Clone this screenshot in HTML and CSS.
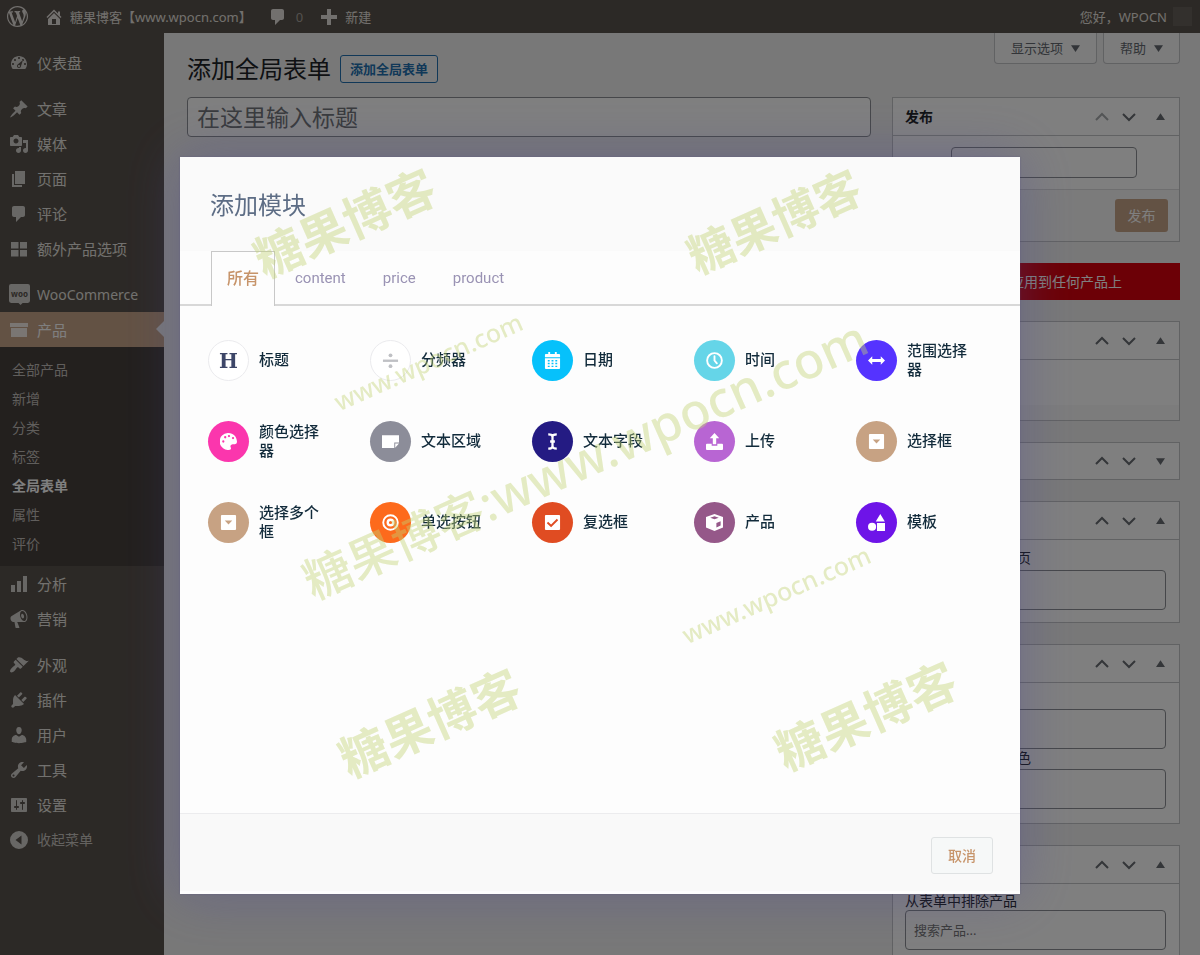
FILE: index.html
```html
<!DOCTYPE html>
<html lang="zh-CN">
<head>
<meta charset="utf-8">
<meta name="viewport" content="width=device-width, initial-scale=1">
<title>添加全局表单</title>
<link rel="stylesheet" href="styles.css">
</head>
<body>
<svg class="sprite" aria-hidden="true">
  <symbol id="wp" viewBox="0 0 20 20"><path d="M20 10c0-5.51-4.49-10-10-10C4.48 0 0 4.49 0 10c0 5.52 4.48 10 10 10 5.51 0 10-4.48 10-10zM7.78 15.37L4.37 6.22c.55-.02 1.17-.08 1.17-.08.5-.06.44-1.13-.06-1.11 0 0-1.45.11-2.37.11-.18 0-.37 0-.58-.01C4.12 2.69 6.87 1.11 10 1.11c2.33 0 4.45.87 6.05 2.34-.68-.11-1.65.39-1.65 1.58 0 .74.45 1.36.9 2.1.35.61.55 1.36.55 2.46 0 1.49-1.4 5-1.4 5l-3.03-8.37c.54-.02.82-.17.82-.17.5-.05.44-1.25-.06-1.22 0 0-1.44.12-2.38.12-.87 0-2.33-.12-2.33-.12-.5-.03-.56 1.2-.06 1.22l.92.08 1.26 3.41zM17.41 10c.24-.64.74-1.87.43-4.25.7 1.29 1.05 2.71 1.05 4.25 0 3.29-1.73 6.24-4.4 7.78.97-2.59 1.94-5.2 2.92-7.78zM6.1 18.09C3.12 16.65 1.11 13.53 1.11 10c0-1.3.23-2.48.72-3.59C3.25 10.3 4.67 14.2 6.1 18.09zm4.03-6.63l2.58 6.98c-.86.29-1.76.45-2.71.45-.79 0-1.57-.11-2.29-.33.81-2.38 1.62-4.74 2.42-7.1z"/></symbol>
  <symbol id="home" viewBox="0 0 20 20"><path fill-rule="evenodd" d="M16 8.5l1.53 1.53-1.06 1.06L10 4.6l-6.47 6.49-1.06-1.06L10 2.500l4 4v-2h2v4zm-6-2.46l6 5.990V18H4v-5.970zM12 17v-5H8v5h4z"/></symbol>
  <symbol id="comment" viewBox="0 0 20 20"><path d="M5 2h9c1.1 0 2 .9 2 2v7c0 1.1-.9 2-2 2h-2l-5 5v-5H5c-1.100 0-2-.9-2-2V4c0-1.100.9-2 2-2z"/></symbol>
  <symbol id="plus" viewBox="0 0 20 20"><path d="M8 2h4v6h6v4h-6v6H8v-6H2V8h6z"/></symbol>
  <symbol id="dash" viewBox="0 0 20 20"><path fill-rule="evenodd" d="M3.760 16h12.480c1.100-1.370 1.760-3.110 1.760-5 0-4.420-3.580-8-8-8s-8 3.580-8 8c0 1.890.66 3.630 1.760 5zM10 4c.55 0 1 .45 1 1s-.45 1-1 1-1-.45-1-1 .45-1 1-1zM6 6c.55 0 1 .45 1 1s-.45 1-1 1-1-.45-1-1 .45-1 1-1zm8 0c.55 0 1 .45 1 1s-.45 1-1 1-1-.45-1-1 .45-1 1-1zm-5.370 5.550L14 7l-2 6c0 1.100-.9 2-2 2s-2-.9-2-2c0-.57.24-1.080.63-1.450zM4 10c.55 0 1 .45 1 1s-.45 1-1 1-1-.45-1-1 .45-1 1-1zm12 0c.55 0 1 .45 1 1s-.45 1-1 1-1-.45-1-1 .45-1 1-1zm-5 3c0-.55-.45-1-1-1s-1 .45-1 1 .45 1 1 1 1-.45 1-1z"/></symbol>
  <symbol id="pin" viewBox="0 0 20 20"><path d="M10.440 3.020l1.820-1.820 6.360 6.350-1.830 1.820c-1.050-.68-2.480-.57-3.410.36l-.75.75c-.92.93-1.040 2.350-.35 3.410l-1.830 1.820-2.410-2.410-2.800 2.790c-.42.42-3.380 2.710-3.800 2.290s1.860-3.390 2.280-3.810l2.790-2.790L4.100 9.360l1.830-1.820c1.050.69 2.480.57 3.400-.36l.75-.75c.93-.92 1.050-2.350.36-3.410z"/></symbol>
  <symbol id="media" viewBox="0 0 20 20"><path fill-rule="evenodd" d="M13 11V4c0-.55-.45-1-1-1h-1.670L9 1H5L3.670 3H2c-.55 0-1 .45-1 1v7c0 .55.45 1 1 1h10c.55 0 1-.45 1-1zM7 4.500c1.380 0 2.500 1.120 2.500 2.500S8.380 9.500 7 9.500 4.500 8.380 4.500 7 5.620 4.500 7 4.500zM14 6h5v10.500c0 1.380-1.120 2.500-2.500 2.500S14 17.880 14 16.500s1.120-2.500 2.500-2.500c.17 0 .34.02.5.05V9h-3V6zm-4 8.050V13h2v3.500c0 1.380-1.120 2.500-2.500 2.500S7 17.880 7 16.500 8.120 14 9.500 14c.17 0 .34.02.5.05z"/></symbol>
  <symbol id="page" viewBox="0 0 20 20"><path d="M6 15V2h10v13H6zm-1 1h8v2H3V5h2v11z"/></symbol>
  <symbol id="grid" viewBox="0 0 20 20"><path d="M2 3h7.500v6.500H2zM11 3h7v6.500h-7zM2 11h7.500v6.500H2zM11 11h7v6.500h-7z"/></symbol>
  <symbol id="bubble" viewBox="0 0 20 20"><path d="M2 0h16a2 2 0 0 1 2 2v14a2 2 0 0 1-2 2h-5l-2 2-2-2H2a2 2 0 0 1-2-2V2a2 2 0 0 1 2-2z"/></symbol>
  <symbol id="box" viewBox="0 0 20 20"><path d="M1 3h18v4H1zM2 8h16v9H2z"/></symbol>
  <symbol id="bars" viewBox="0 0 20 20"><path d="M2 11h4v7H2zM8 7h4v11H8zM14 2h4v16h-4z"/></symbol>
  <symbol id="mega" viewBox="0 0 20 20"><path fill-rule="evenodd" d="M18.150 5.940c.46 1.620.38 3.220-.02 4.480-.42 1.280-1.260 2.180-2.300 2.480-.16.06-.26.06-.4.06-.06.02-.12.02-.18.02-.06.02-.14.02-.22.02h-6.800l2.220 5.500c.02.14-.06.26-.14.34-.08.1-.24.16-.34.16H6.950c-.1 0-.26-.06-.34-.16-.08-.08-.16-.2-.14-.34l-1-5.500H4.250l-.02-.02c-.5.06-1.080-.18-1.540-.62s-.88-1.080-1.060-1.880c-.24-.8-.2-1.560-.02-2.200.18-.62.58-1.080 1.060-1.300l.02-.02 9-5.400c.1-.06.18-.1.24-.16.06-.04.14-.08.24-.12.16-.08.28-.12.5-.18 1.040-.3 2.240.1 3.220.98s1.840 2.240 2.260 3.860zm-2.580 5.980h-.02c.4-.1.74-.34 1.040-.7.58-.7.86-1.760.86-3.040 0-.64-.1-1.300-.28-1.980-.34-1.360-1.020-2.500-1.780-3.240s-1.680-1.100-2.460-.88c-.82.22-1.400.96-1.700 2-.32 1.040-.28 2.360.06 3.720.38 1.360 1 2.500 1.800 3.240.78.74 1.620 1.100 2.480.88zm-2.540-7.080c.22-.04.42-.02.62.04.38.16.76.48 1.020 1s.42 1.200.42 1.780c0 .3-.04.56-.12.8-.18.48-.44.84-.86.94-.34.1-.8-.06-1.140-.4s-.64-.86-.78-1.500c-.18-.62-.12-1.240.02-1.720s.48-.84.82-.94z"/></symbol>
  <symbol id="brush" viewBox="0 0 20 20"><path d="M14.480 11.060L7.410 3.990l1.500-1.500c.5-.56 2.300-.47 3.510.32 1.210.8 1.430 1.280 2.910 2.100 1.180.64 2.450 1.260 4.450.85zm-.71.71L6.700 4.700 4.930 6.470c-.39.39-.39 1.020 0 1.410l1.060 1.060c.39.39.39 1.030 0 1.420-.6.6-1.430 1.110-2.210 1.690-.35.26-.7.53-1.010.84C1.430 14.230.4 16.080 1.400 17.070c.99 1 2.840-.03 4.180-1.360.31-.31.58-.66.85-1.020.57-.78 1.080-1.610 1.690-2.210.39-.39 1.020-.39 1.410 0l1.060 1.060c.39.39 1.020.39 1.410 0z"/></symbol>
  <symbol id="plug" viewBox="0 0 20 20"><path d="M13.110 4.360L9.870 7.600 8 5.730l3.240-3.240c.35-.34 1.050-.2 1.560.32.52.51.66 1.210.31 1.550zm-8 1.770l.91-1.120 9.010 9.010-1.190.84c-.71.71-2.630 1.160-3.820 1.160H6.140L4.900 17.260c-.59.59-1.540.59-2.120 0-.59-.58-.59-1.530 0-2.120l1.240-1.240v-3.880c0-1.130.4-3.190 1.090-3.890zm7.260 3.970l3.240-3.240c.34-.35 1.040-.21 1.550.31.52.51.66 1.210.31 1.550l-3.240 3.250z"/></symbol>
  <symbol id="user" viewBox="0 0 20 20"><path d="M10 9.250c-2.270 0-2.730-3.440-2.730-3.440C7 4.020 7.820 2 9.970 2c2.160 0 2.980 2.020 2.710 3.810 0 0-.41 3.440-2.680 3.440zm0 2.570L12.720 10c2.390 0 4.520 2.330 4.520 4.530v2.490s-3.650 1.130-7.240 1.130c-3.650 0-7.240-1.130-7.240-1.130v-2.490c0-2.250 1.940-4.480 4.470-4.480z"/></symbol>
  <symbol id="wrench" viewBox="0 0 20 20"><path fill-rule="evenodd" d="M16.680 9.770c-1.340 1.340-3.300 1.670-4.950.99l-5.410 6.520c-.99.99-2.590.99-3.580 0s-.99-2.590 0-3.570l6.520-5.420c-.68-1.650-.35-3.610.99-4.950 1.280-1.280 3.120-1.620 4.720-1.060l-2.890 2.890 2.820 2.820 2.860-2.870c.53 1.580.18 3.390-1.080 4.650zM3.810 16.210c.4.39 1.040.39 1.430 0 .4-.4.4-1.040 0-1.430-.39-.4-1.030-.4-1.430 0-.39.39-.39 1.030 0 1.430z"/></symbol>
  <symbol id="sliders" viewBox="0 0 20 20"><path fill-rule="evenodd" d="M18 16V4c0-.55-.45-1-1-1H3c-.55 0-1 .45-1 1v12c0 .55.45 1 1 1h14c.55 0 1-.45 1-1zM8 11h1c.55 0 1 .45 1 1s-.45 1-1 1H8v1.500c0 .28-.22.5-.5.5s-.5-.22-.5-.5V13H6c-.55 0-1-.45-1-1s.45-1 1-1h1V5.500c0-.28.22-.5.5-.5s.5.22.5.5V11zm5-2h-1c-.55 0-1-.45-1-1s.45-1 1-1h1V5.500c0-.28.22-.5.5-.5s.5.22.5.5V7h1c.55 0 1 .45 1 1s-.45 1-1 1h-1v5.500c0 .28-.22.5-.5.5s-.5-.22-.5-.5V9z"/></symbol>
  <symbol id="collapse" viewBox="0 0 20 20"><path fill-rule="evenodd" d="M10 1a9 9 0 1 1 0 18 9 9 0 0 1 0-18zm2.500 4.500L6.500 10l6 4.500z"/></symbol>
  <symbol id="up" viewBox="0 0 14 14"><path d="M1 10l6-6 6 6" fill="none" stroke="currentColor" stroke-width="2"/></symbol>
  <symbol id="down" viewBox="0 0 14 14"><path d="M1 4l6 6 6-6" fill="none" stroke="currentColor" stroke-width="2"/></symbol>
  <symbol id="tri-up" viewBox="0 0 8 8"><path d="M4 1l4 6H0z"/></symbol>
  <symbol id="tri-down" viewBox="0 0 8 8"><path d="M4 7L0 1h8z"/></symbol>
  <symbol id="i-divide" viewBox="0 0 18 18"><path d="M1 8h16v2.500H1z"/><circle cx="9" cy="3.500" r="2"/><circle cx="9" cy="15" r="2"/></symbol>
  <symbol id="i-calendar" viewBox="0 0 18 18"><path fill-rule="evenodd" d="M4.500 0h2v2h5V0h2v2H16a1 1 0 0 1 1 1v2.500H1V3a1 1 0 0 1 1-1h2.500zM1 6.500h16V17a1 1 0 0 1-1 1H2a1 1 0 0 1-1-1zM4 8.500v1.500h2V8.500zm4 0v1.500h2V8.500zm4 0v1.500h2V8.500zM4 11.500v1.500h2v-1.500zm4 0v1.500h2v-1.500zm4 0v1.500h2v-1.500zM4 14.500V16h2v-1.500zm4 0V16h2v-1.500zm4 0V16h2v-1.500z"/></symbol>
  <symbol id="i-clock" viewBox="0 0 18 18"><circle cx="9" cy="9" r="7.800" fill="none" stroke="currentColor" stroke-width="2"/><path d="M9 4.500V9l2.500 3" fill="none" stroke="currentColor" stroke-width="2" stroke-linecap="round"/></symbol>
  <symbol id="i-range" viewBox="0 0 18 18"><path d="M0 9l4.500-4.500v3h9v-3L18 9l-4.500 4.500v-3h-9v3z"/></symbol>
  <symbol id="i-palette" viewBox="0 0 18 18"><path fill-rule="evenodd" d="M9 0a9 9 0 1 0 1.500 17.800c1.300-.3 1.300-1.600.8-2.600-.8-1.700.4-3.400 2.200-3.400h2.300A2.200 2.200 0 0 0 18 9.600C18 4 14 0 9 0zM3.500 10.200a1.200 1.200 0 1 1 0-2.400 1.200 1.200 0 0 1 0 2.400zm2-4.500a1.200 1.200 0 1 1 0-2.400 1.200 1.200 0 0 1 0 2.400zM9.500 4.400a1.200 1.200 0 1 1 0-2.400 1.200 1.200 0 0 1 0 2.400zm4.300 2.200a1.200 1.200 0 1 1 0-2.400 1.200 1.200 0 0 1 0 2.400z"/></symbol>
  <symbol id="i-note" viewBox="0 0 18 18"><path d="M0 2.500h18V10h-5v6H0zM14 11h4l-4 4.500z"/></symbol>
  <symbol id="i-cursor" viewBox="0 0 18 18"><path d="M4.500 1.500c2.500 0 4.500.5 4.500 2.500 0-2 2-2.500 4.500-2.500M4.500 16.500c2.500 0 4.500-.5 4.500-2.500 0 2 2 2.500 4.500 2.500M9 3.500v11M6.500 9h5" fill="none" stroke="currentColor" stroke-width="2.400"/></symbol>
  <symbol id="i-upload" viewBox="0 0 18 18"><path d="M9 0l5 5.500h-3.200V12H7.200V5.500H4zM1 11.500h5V13.500h6v-2h5a1 1 0 0 1 1 1V17a1 1 0 0 1-1 1H1a1 1 0 0 1-1-1v-4.500a1 1 0 0 1 1-1z"/></symbol>
  <symbol id="i-select" viewBox="0 0 18 18"><path fill-rule="evenodd" d="M2 1h14a1 1 0 0 1 1 1v14a1 1 0 0 1-1 1H2a1 1 0 0 1-1-1V2a1 1 0 0 1 1-1zm3 6l4 4 4-4z"/></symbol>
  <symbol id="i-radio" viewBox="0 0 18 18"><circle cx="9" cy="9" r="7.700" fill="none" stroke="currentColor" stroke-width="2"/><path fill-rule="evenodd" d="M9 4.800a4.200 4.200 0 1 1 0 8.400 4.200 4.200 0 0 1 0-8.400zm0 2.500a1.700 1.700 0 1 0 0 3.400 1.700 1.700 0 0 0 0-3.400z"/></symbol>
  <symbol id="i-check" viewBox="0 0 18 18"><path fill-rule="evenodd" d="M2 1h14a1 1 0 0 1 1 1v14a1 1 0 0 1-1 1H2a1 1 0 0 1-1-1V2a1 1 0 0 1 1-1zm2.300 7.300L3 9.700l4.500 4.300L15 6.500 13.600 5.100l-6.100 6.100z"/></symbol>
  <symbol id="i-cube" viewBox="0 0 18 18"><path fill-rule="evenodd" d="M9 0l9 3.200v11L9 18 0 14.200v-11zM4.500 4L9 5.600 13.500 4 9 2.500zM11 9.500v4.700l4.500-2V7.800z"/></symbol>
  <symbol id="i-shapes" viewBox="0 0 18 18"><path d="M13 0l4.800 8H8.200zM9.500 9.500H18V18H9.500z"/><circle cx="4.300" cy="13.500" r="4.300"/></symbol>
</svg>

<header class="bar">
  <a class="bar-item" href="#" aria-label="WordPress"><svg class="icon-lg"><use href="#wp"/></svg></a>
  <a class="bar-item" href="#"><svg class="icon"><use href="#home"/></svg>糖果博客【www.wpocn.com】</a>
  <a class="bar-item bar-comments" href="#"><svg class="icon"><use href="#comment"/></svg><span>0</span></a>
  <a class="bar-item" href="#"><svg class="icon"><use href="#plus"/></svg>新建</a>
  <a class="bar-item bar-user" href="#">您好，WPOCN<span class="avatar"></span></a>
</header>

<div class="shell">
  <nav class="menu">
    <a href="#"><svg class="icon"><use href="#dash"/></svg>仪表盘</a>
    <a class="first" href="#"><svg class="icon"><use href="#pin"/></svg>文章</a>
    <a href="#"><svg class="icon"><use href="#media"/></svg>媒体</a>
    <a href="#"><svg class="icon"><use href="#page"/></svg>页面</a>
    <a href="#"><svg class="icon"><use href="#comment"/></svg>评论</a>
    <a href="#"><svg class="icon"><use href="#grid"/></svg>额外产品选项</a>
    <a class="first woo" href="#"><span class="woo-badge"><svg class="icon-lg"><use href="#bubble"/></svg><b>woo</b></span>WooCommerce</a>
    <a class="current" href="#"><svg class="icon"><use href="#box"/></svg>产品</a>
    <div class="submenu">
      <a href="#">全部产品</a>
      <a href="#">新增</a>
      <a href="#">分类</a>
      <a href="#">标签</a>
      <a class="active" href="#">全局表单</a>
      <a href="#">属性</a>
      <a href="#">评价</a>
    </div>
    <a href="#"><svg class="icon"><use href="#bars"/></svg>分析</a>
    <a href="#"><svg class="icon"><use href="#mega"/></svg>营销</a>
    <a class="first" href="#"><svg class="icon"><use href="#brush"/></svg>外观</a>
    <a href="#"><svg class="icon"><use href="#plug"/></svg>插件</a>
    <a href="#"><svg class="icon"><use href="#user"/></svg>用户</a>
    <a href="#"><svg class="icon"><use href="#wrench"/></svg>工具</a>
    <a href="#"><svg class="icon"><use href="#sliders"/></svg>设置</a>
    <button type="button" class="collapse"><svg class="icon"><use href="#collapse"/></svg>收起菜单</button>
  </nav>

  <main class="content">
    <div class="top">
      <div class="heading">
        <h1>添加全局表单</h1>
        <a class="add-new" href="#">添加全局表单</a>
      </div>
      <div class="screen-tabs">
        <button type="button">显示选项<svg class="tri"><use href="#tri-down"/></svg></button>
        <button type="button">帮助<svg class="tri"><use href="#tri-down"/></svg></button>
      </div>
    </div>
    <div class="columns">
      <input class="title-input" type="text" placeholder="在这里输入标题" aria-label="标题">
      <aside class="side">
        <section class="panel">
          <header><h2>发布</h2><svg class="chev dim"><use href="#up"/></svg><svg class="chev"><use href="#down"/></svg><svg class="tri"><use href="#tri-up"/></svg></header>
          <div class="order-row"><label for="order">优先级</label><input id="order" type="text"></div>
          <div class="publish-row"><button type="button" class="publish">发布</button></div>
        </section>
        <p class="alert">此表单目前不会应用到任何产品上</p>
        <section class="panel">
          <header><svg class="chev"><use href="#up"/></svg><svg class="chev"><use href="#down"/></svg><svg class="tri"><use href="#tri-up"/></svg></header>
          <div class="blank"></div>
        </section>
        <section class="panel closed">
          <header><svg class="chev"><use href="#up"/></svg><svg class="chev"><use href="#down"/></svg><svg class="tri"><use href="#tri-down"/></svg></header>
        </section>
        <section class="panel">
          <header><svg class="chev"><use href="#up"/></svg><svg class="chev"><use href="#down"/></svg><svg class="tri"><use href="#tri-up"/></svg></header>
          <div class="fields"><label for="f1">将表单应用到产品页</label><input id="f1" type="text"></div>
        </section>
        <section class="panel">
          <header><svg class="chev"><use href="#up"/></svg><svg class="chev"><use href="#down"/></svg><svg class="tri"><use href="#tri-up"/></svg></header>
          <div class="fields two"><label for="f2">启用角色</label><input id="f2" type="text"><label for="f3">从表单中排除的角色</label><input id="f3" type="text"></div>
        </section>
        <section class="panel">
          <header><svg class="chev"><use href="#up"/></svg><svg class="chev"><use href="#down"/></svg><svg class="tri"><use href="#tri-up"/></svg></header>
          <div class="fields tight"><label for="f4">从表单中排除产品</label><input id="f4" type="text" placeholder="搜索产品..."></div>
        </section>
      </aside>
    </div>
  </main>
</div>

<div class="overlay">
  <div class="dialog" role="dialog" aria-labelledby="dlg-title">
    <h2 id="dlg-title" class="dialog-title">添加模块</h2>
    <div class="tabs" role="tablist">
      <button type="button" role="tab" aria-selected="true">所有</button>
      <button type="button" role="tab" aria-selected="false">content</button>
      <button type="button" role="tab" aria-selected="false">price</button>
      <button type="button" role="tab" aria-selected="false">product</button>
    </div>
    <div class="modules">
      <button type="button"><span class="disc outline heading-disc">H</span><span class="name">标题</span></button>
      <button type="button"><span class="disc outline divider-disc"><svg><use href="#i-divide"/></svg></span><span class="name">分频器</span></button>
      <button type="button"><span class="disc date"><svg><use href="#i-calendar"/></svg></span><span class="name">日期</span></button>
      <button type="button"><span class="disc time"><svg><use href="#i-clock"/></svg></span><span class="name">时间</span></button>
      <button type="button"><span class="disc range"><svg><use href="#i-range"/></svg></span><span class="name">范围选择器</span></button>
      <button type="button"><span class="disc color"><svg><use href="#i-palette"/></svg></span><span class="name">颜色选择器</span></button>
      <button type="button"><span class="disc area"><svg><use href="#i-note"/></svg></span><span class="name">文本区域</span></button>
      <button type="button"><span class="disc field"><svg><use href="#i-cursor"/></svg></span><span class="name">文本字段</span></button>
      <button type="button"><span class="disc upload"><svg><use href="#i-upload"/></svg></span><span class="name">上传</span></button>
      <button type="button"><span class="disc select"><svg><use href="#i-select"/></svg></span><span class="name">选择框</span></button>
      <button type="button"><span class="disc select"><svg><use href="#i-select"/></svg></span><span class="name">选择多个框</span></button>
      <button type="button"><span class="disc radio"><svg><use href="#i-radio"/></svg></span><span class="name">单选按钮</span></button>
      <button type="button"><span class="disc check"><svg><use href="#i-check"/></svg></span><span class="name">复选框</span></button>
      <button type="button"><span class="disc product"><svg><use href="#i-cube"/></svg></span><span class="name">产品</span></button>
      <button type="button"><span class="disc template"><svg><use href="#i-shapes"/></svg></span><span class="name">模板</span></button>
    </div>
    <div class="dialog-foot"><button type="button" class="cancel">取消</button></div>
    <div class="marks" aria-hidden="true">
      <span class="mark m1">糖果博客</span>
      <span class="mark m2">糖果博客</span>
      <span class="mark m3">糖果博客</span>
      <span class="mark m4">糖果博客</span>
      <span class="mark small m5">www.wpocn.com</span>
      <span class="mark small m6">www.wpocn.com</span>
      <span class="mark m7">糖果博客:<span class="site">www.wpocn.com</span></span>
    </div>
  </div>
</div>
</body>
</html>
```
FILE: styles.css
```css
* { box-sizing: border-box; }

body {
  margin: 0;
  height: 100vh;
  overflow: hidden;
  display: flex;
  flex-direction: column;
  background: #f0f0f1;
  color: #2c3338;
  font: 14px/20px "Noto Sans", "Noto Sans CJK SC", sans-serif;
}

a { color: inherit; text-decoration: none; }
button, input { font: inherit; color: inherit; }
button { background: none; border: 0; padding: 0; }
h1, h2, p { margin: 0; font-weight: 400; }
svg { fill: currentColor; flex: none; }
.sprite { display: none; }
.icon { width: 20px; height: 20px; }
.icon-lg { width: 21px; height: 21px; }

/* admin bar */
.bar {
  display: flex;
  align-items: center;
  height: 33px;
  flex: none;
  padding: 0 8px 0 7px;
  gap: 16px;
  background: #59524c;
  color: #e4e0dc;
  font-size: 13px;
}
.bar-item { display: flex; align-items: center; gap: 6px; white-space: nowrap; }
.bar-comments span { margin-left: 2px; color: #a8a29c; }
.bar-user { margin-left: auto; }
.avatar { width: 19px; height: 19px; background: #66605a; }

/* side menu */
.shell { display: flex; flex: 1; min-height: 0; }
.menu {
  width: 164px;
  flex: none;
  padding-top: 12px;
  background: #59524c;
  color: #e4e2de;
  font-size: 15px;
}
.menu > a, .collapse {
  display: flex;
  align-items: center;
  gap: 8px;
  width: 100%;
  height: 35px;
  padding-left: 9px;
}
.menu .icon { color: #d0cecb; }
.menu > .first { margin-top: 11px; }
.collapse { font-size: 14px; color: #c8c5c1; }
.menu > .woo { font-size: 14px; gap: 7px; }
.woo-badge { display: grid; place-items: center; color: #d0cecb; }
.woo-badge > * { grid-area: 1 / 1; }
.woo-badge b { color: #59524c; font-size: 8px; line-height: 12px; margin-bottom: 2px; }
.menu > .current { position: relative; background: #c7a589; color: #fff; }
.menu .current .icon { color: #f4ece6; }
.menu > .current::after {
  content: "";
  position: absolute;
  right: 0;
  top: 9px;
  border: 8px solid transparent;
  border-left-width: 0;
  border-right-color: #f0f0f1;
}
.submenu { padding: 8px 0; background: #46403c; color: #c0bcb8; font-size: 14px; }
.submenu a { display: block; padding-left: 12px; line-height: 29px; }
.submenu .active { color: #fff; font-weight: 700; }

/* page */
.content { flex: 1; min-width: 0; padding: 0 20px 0 23px; }
.top { display: flex; justify-content: space-between; align-items: flex-start; height: 64px; }
.heading { display: flex; align-items: center; gap: 9px; padding-top: 20px; }
.heading h1 { font-size: 24px; line-height: 32px; color: #1d2327; }
.add-new {
  padding: 3px 9px;
  border: 1px solid #2271b1;
  border-radius: 3px;
  background: #f6f7f7;
  color: #2271b1;
  font-size: 13px;
  font-weight: 600;
}
.screen-tabs { display: flex; gap: 6px; color: #646970; font-size: 13px; }
.screen-tabs button {
  display: flex;
  align-items: center;
  gap: 8px;
  height: 31px;
  padding: 0 16px;
  border: 1px solid #c3c4c7;
  border-top: 0;
  border-radius: 0 0 4px 4px;
  background: #f8f8f8;
}
.tri { width: 9px; height: 9px; }
.columns { display: grid; grid-template-columns: minmax(0, 1fr) 288px; gap: 21px; align-items: start; }
.title-input {
  width: 100%;
  height: 40px;
  padding: 0 9px;
  border: 1px solid #8c8f94;
  border-radius: 4px;
  background: #fff;
  font-size: 23px;
}
.title-input::placeholder { color: #72767a; }
.side { display: flex; flex-direction: column; gap: 21px; }
.panel { border: 1px solid #c3c4c7; background: #fff; }
.panel > header {
  display: flex;
  align-items: center;
  justify-content: flex-end;
  gap: 13px;
  height: 38px;
  padding-right: 14px;
  border-bottom: 1px solid #c3c4c7;
  color: #686c72;
}
.closed > header { height: 36px; border-bottom: 0; }
.panel h2 { margin-right: auto; padding-left: 12px; font-size: 14px; font-weight: 700; color: #1d2327; }
.chev { width: 14px; height: 14px; }
.panel > header .tri { margin-left: 7px; }
.dim { color: #a7aaad; }
.panel input { border: 1px solid #8c8f94; border-radius: 4px; background: #fff; padding: 0 8px; min-width: 0; }
.order-row { display: flex; align-items: center; gap: 4px; height: 53px; padding: 0 42px 0 12px; font-size: 13px; }
.order-row label { width: 42px; }
.order-row input { flex: 1; height: 31px; }
.publish-row { display: flex; justify-content: flex-end; padding: 9px 11px; border-top: 1px solid #dcdcde; background: #f6f7f7; }
.publish { width: 53px; height: 33px; border-radius: 3px; background: #c7a589; color: #fff; }
.alert { height: 37px; padding-left: 20px; background: #d9000c; color: #fff; line-height: 37px; white-space: nowrap; }
.blank { height: 60px; background: linear-gradient(#fff 75%, #f9f9f9 75%); }
.fields { display: flex; flex-direction: column; padding: 8px 13px 12px 12px; }
.fields label { color: #1d2327; line-height: 20px; }
.fields input { height: 40px; margin-top: 2px; font-size: 13px; }
.two { padding-top: 6px; padding-bottom: 14px; }
.two label { line-height: 18px; }
.tight label { line-height: 18px; }
.tight input { margin-top: 0; }

/* dialog */
.overlay {
  position: fixed;
  inset: 0;
  display: flex;
  padding: 157px 15% 61px;
  background: rgba(0, 0, 0, .5);
}
.dialog {
  position: relative;
  flex: 1;
  display: flex;
  flex-direction: column;
  padding-bottom: 3px;
  background: #fdfdfd;
  box-shadow: 0 0 50px rgba(80, 75, 150, .4), 0 0 2px rgba(80, 75, 130, .4);
  font-family: Roboto, "Noto Sans CJK SC", sans-serif;
}
.dialog-title { padding: 33px 30px 28px; background: #fafafa; color: #5d6d85; font-size: 24px; line-height: 33px; }
.tabs { display: flex; padding-left: 31px; border-bottom: 2px solid #d8d8d8; color: #9a93b4; font-size: 15px; line-height: 24px; }
.tabs button { height: 53px; margin-right: -3px; padding: 0 20px; }
.tabs button[aria-selected="true"] {
  margin: 0 0 -2px;
  height: 55px;
  padding: 0 15px;
  border: 1px solid #c8c8c8;
  border-bottom: 0;
  background: #fdfdfd;
  color: #c7946a;
  font-size: 16px;
  font-weight: 500;
}
.modules {
  flex: 1;
  display: grid;
  grid-template-columns: repeat(5, 1fr);
  grid-auto-rows: 41px;
  align-content: start;
  row-gap: 40px;
  padding: 34px 2px 0 28px;
}
.modules button { display: flex; align-items: center; gap: 10px; padding-right: 38px; text-align: left; }
.name { color: #122b3b; font-size: 15px; font-weight: 500; line-height: 19px; }
.disc { display: grid; place-items: center; width: 41px; height: 41px; flex: none; border-radius: 50%; color: #fff; }
.disc svg { width: 17px; height: 17px; }
.outline { border: 1px solid #ebebee; background: #fff; }
.heading-disc { color: #3d4668; font: 700 20px/24px "DejaVu Serif", serif; }
.divider-disc { color: #bfc0c4; }
.date { background: #06c1fb; }
.time { background: #65d5e8; }
.range { background: #5533ff; }
.color { background: #fb36ad; }
.area { background: #8c8d99; }
.field { background: #241b83; }
.upload { background: #b865d3; }
.select { background: #c7a283; }
.radio { background: #fd6a1c; }
.check { background: #e04c22; }
.product { background: #955889; }
.template { background: #6e14e8; }
.dialog-foot { display: flex; justify-content: flex-end; padding: 23px 27px 17px; border-top: 1px solid #ececee; background: #f9f9f9; }
.cancel {
  width: 62px;
  height: 37px;
  border: 1px solid #dfe2e3;
  border-radius: 3px;
  background: #f6f8f8;
  color: #c7946a;
  font-size: 14px;
  font-weight: 500;
}

/* diagonal site marks over the dialog */
.marks { position: absolute; inset: 0; pointer-events: none; }
.mark {
  position: absolute;
  color: rgba(192, 210, 115, .42);
  font: 600 48px/72px "Noto Sans", "Noto Sans CJK SC", sans-serif;
  white-space: nowrap;
  transform: translate(-50%, -50%) rotate(-24deg);
}
.small { font-size: 25px; font-weight: 500; line-height: 40px; }
.site { font-size: 50px; }
.m1 { left: 165px; top: 66px; }
.m2 { left: 594px; top: 64px; font-size: 46px; }
.m3 { left: 250px; top: 566px; }
.m4 { left: 686px; top: 559px; }
.m5 { left: 248px; top: 204px; }
.m6 { left: 596px; top: 437px; }
.m7 { left: 405px; top: 302px; font-weight: 500; }
```
